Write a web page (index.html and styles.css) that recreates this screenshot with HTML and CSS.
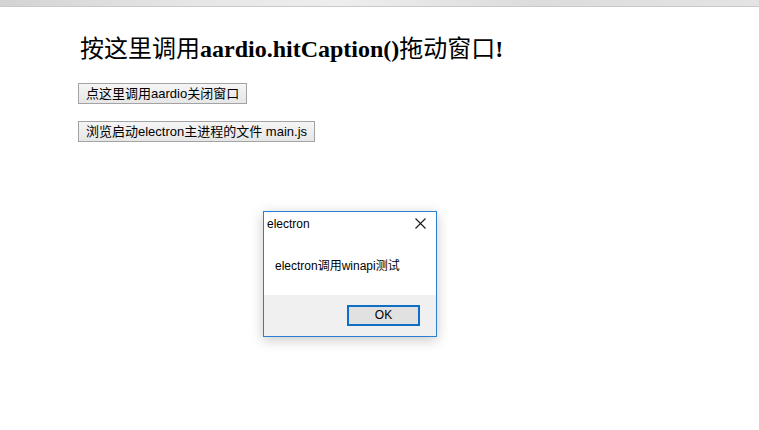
FILE: index.html
```html
<!DOCTYPE html>
<html lang="zh-CN">
<head>
<meta charset="utf-8">
<title>electron</title>
<link rel="stylesheet" href="styles.css">
</head>
<body>
<div class="topbar"></div>
<main class="page">
  <h2 class="heading"><span class="cjk">按这里调用</span>aardio.hitCaption()<span class="cjk">拖动窗口</span>!</h2>
  <div class="actions">
    <button class="btn" type="button">点这里调用aardio关闭窗口</button>
    <button class="btn" type="button">浏览启动electron主进程的文件 main.js</button>
  </div>
</main>
<div class="dialog" role="dialog">
  <div class="dialog-title">
    <span class="dialog-caption">electron</span>
    <svg class="dialog-close" width="11" height="11" viewBox="0 0 11 11" aria-hidden="true">
      <path d="M0.5 0.5 L10.5 10.5 M10.5 0.5 L0.5 10.5" stroke="#1a1a1a" stroke-width="1.1" fill="none"/>
    </svg>
  </div>
  <div class="dialog-body">electron调用winapi测试</div>
  <div class="dialog-footer">
    <button class="ok" type="button">OK</button>
  </div>
</div>
</body>
</html>
```
FILE: styles.css
```css
html, body {
  margin: 0;
  padding: 0;
  background: #ffffff;
}
body {
  width: 759px;
  height: 430px;
  overflow: hidden;
  position: relative;
  font-family: "Liberation Sans", "Noto Sans CJK SC", sans-serif;
}
.topbar {
  height: 6px;
  background: linear-gradient(to right, #d3d3d3 0%, #e6e6e6 25%, #eeeeee 45%, #dcdcdc 70%, #e4e4e4 100%);
  border-bottom: 1px solid #c9c9c9;
}
.page {
  padding-left: 78px;
  display: flex;
  flex-direction: column;
}
.heading {
  margin: 25px 0 0 2px;
  font-family: "Liberation Serif", "Noto Sans CJK SC", serif;
  font-weight: bold;
  font-size: 24px;
  line-height: 30px;
  color: #000;
}
.heading .cjk {
  font-family: "Noto Sans CJK SC", serif;
  font-weight: normal;
}
.actions {
  display: flex;
  flex-direction: column;
  align-items: flex-start;
  gap: 17px;
  margin-top: 19px;
}
.btn {
  box-sizing: border-box;
  height: 21px;
  padding: 0 7px;
  border: 1px solid #a3a3a3;
  border-radius: 0;
  background: linear-gradient(to bottom, #f5f5f5, #e6e6e6);
  font-family: "Liberation Sans", "Noto Sans CJK SC", sans-serif;
  font-size: 13px;
  line-height: 19px;
  color: #000;
}
.dialog {
  position: absolute;
  left: 263px;
  top: 211px;
  width: 172px;
  border: 1px solid #2a7fd4;
  background: #ffffff;
  box-shadow: 0 3px 12px rgba(0, 0, 0, 0.22);
  font-family: "Liberation Sans", "Noto Sans CJK SC", sans-serif;
  font-size: 12px;
  color: #000;
}
.dialog-title {
  height: 22px;
  display: flex;
  align-items: center;
  justify-content: space-between;
  padding: 0 10px 0 3px;
}
.dialog-caption {
  line-height: 16px;
  margin-top: 2px;
}
.dialog-close {
  display: block;
}
.dialog-body {
  height: 61px;
  box-sizing: border-box;
  padding: 24px 0 0 11px;
  line-height: 16px;
}
.dialog-footer {
  height: 41px;
  background: #f0f0f0;
  display: flex;
  justify-content: flex-end;
  align-items: flex-start;
  padding: 10px 16px 0 0;
  box-sizing: border-box;
}
.ok {
  box-sizing: border-box;
  width: 73px;
  height: 21px;
  padding: 0;
  border: 2px solid #0f6fc6;
  border-radius: 0;
  background: #e1e1e1;
  font-family: "Liberation Sans", sans-serif;
  font-size: 12px;
  line-height: 17px;
  color: #000;
}
```
